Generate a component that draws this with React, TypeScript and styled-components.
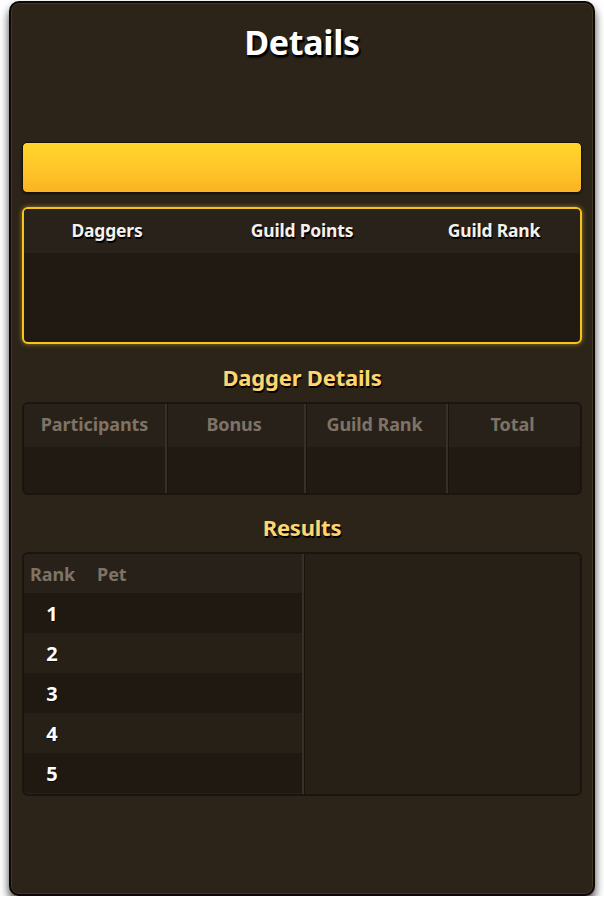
import React from "react";
import styled, { createGlobalStyle } from "styled-components";

const Global = createGlobalStyle`
  html, body { margin: 0; padding: 0; background: #ffffff; }
  body { font-family: "Noto Sans", "Open Sans", sans-serif; }
  * { box-sizing: border-box; }
`;

const Panel = styled.div`
  margin: 1px 0 0 9px;
  width: 586px;
  height: 895px;
  background: #2c2419;
  border: 2px solid #0b0805;
  border-radius: 10px;
  box-shadow: 0 6px 10px rgba(0, 0, 0, 0.75), inset 0 0 0 1px rgba(110, 90, 60, 0.35);
  padding: 0 11px;
  display: flex;
  flex-direction: column;
`;

const Title = styled.h1`
  margin: 17px 0 0;
  font-size: 34px;
  line-height: 44px;
  font-weight: 700;
  color: #ffffff;
  text-align: center;
  letter-spacing: -0.3px;
  text-shadow: 2px 2px 0 #000, 1px 3px 2px rgba(0, 0, 0, 0.8);
`;

const GoldBar = styled.div`
  margin-top: 78px;
  height: 51px;
  border-radius: 5px;
  border: 1px solid #1a1208;
  background: linear-gradient(to bottom, #ffd62b 0%, #ffc82a 45%, #fbb322 100%);
  box-shadow: 0 1px 2px rgba(0, 0, 0, 0.6);
`;

const StatBox = styled.div`
  margin-top: 14px;
  height: 137px;
  border: 2px solid #f5c51d;
  border-radius: 6px;
  background: #201a13;
  box-shadow: 0 0 5px rgba(255, 200, 40, 0.55);
  overflow: hidden;
  display: flex;
  flex-direction: column;
`;

const StatHead = styled.div`
  height: 44px;
  padding-bottom: 2px;
  background: #29221a;
  display: grid;
  grid-template-columns: 166px 224px 160px;
  align-items: center;
`;

const StatLabel = styled.div`
  text-align: center;
  color: #f4f1ec;
  font-size: 17.5px;
  font-weight: 700;
  letter-spacing: -0.2px;
  text-shadow: 1px 2px 0 #000;
`;

const SectionTitle = styled.h2<{ $top: number }>`
  margin: ${(p) => p.$top}px 0 0;
  font-size: 22px;
  line-height: 28px;
  font-weight: 700;
  color: #ffd66e;
  text-align: center;
  letter-spacing: -0.2px;
  text-shadow: 1px 2px 0 #000;
`;

const Table = styled.div<{ $top: number }>`
  margin-top: ${(p) => p.$top}px;
  border: 2px solid #1b1510;
  border-radius: 6px;
  background: #201a13;
  overflow: hidden;
`;

const QuadGrid = styled.div`
  display: grid;
  grid-template-columns: 141px 139px 142px 1fr;
  grid-template-rows: 43px 46px;
`;

const Cell = styled.div<{ $head?: boolean; $divider?: boolean }>`
  background: ${(p) => (p.$head ? "#28211a" : "#201a13")};
  border-left: ${(p) => (p.$divider ? "2px solid #383026" : "none")};
  box-shadow: ${(p) => (p.$divider ? "inset 1px 0 0 #1a140f" : "none")};
  padding-bottom: ${(p) => (p.$head ? "4px" : "0")};
  padding-right: ${(p) => (p.$divider ? "3px" : "0")};
  display: flex;
  align-items: center;
  justify-content: center;
`;

const GrayLabel = styled.span`
  color: #7e7365;
  font-size: 18px;
  font-weight: 700;
  letter-spacing: -0.1px;
`;

const ResultsGrid = styled.div`
  display: grid;
  grid-template-columns: 278px 1fr;
  height: 240px;
`;

const RankList = styled.div`
  display: flex;
  flex-direction: column;
  background: #28211a;
`;

const RankHead = styled.div`
  height: 39px;
  display: flex;
  align-items: center;
  gap: 22px;
  padding-left: 6px;
  background: #28211a;
`;

const RankRow = styled.div<{ $alt: boolean }>`
  height: 40px;
  background: ${(p) => (p.$alt ? "#272017" : "#1f1912")};
  display: flex;
  align-items: center;
`;

const RankNum = styled.div`
  width: 56px;
  text-align: center;
  color: #ffffff;
  font-size: 20px;
  font-weight: 700;
  text-shadow: 1px 1px 0 rgba(0, 0, 0, 0.6);
`;

const SidePane = styled.div`
  background: #262017;
  border-left: 2px solid #383026;
  box-shadow: inset 1px 0 0 #1a140f;
`;

export default function App() {
  const quad = ["Participants", "Bonus", "Guild Rank", "Total"];
  return (
    <>
      <Global />
      <Panel>
        <Title>Details</Title>
        <GoldBar />
        <StatBox>
          <StatHead>
            <StatLabel>Daggers</StatLabel>
            <StatLabel>Guild Points</StatLabel>
            <StatLabel>Guild Rank</StatLabel>
          </StatHead>
        </StatBox>
        <SectionTitle $top={19}>Dagger Details</SectionTitle>
        <Table $top={11}>
          <QuadGrid>
            {quad.map((q, i) => (
              <Cell key={q} $head $divider={i > 0}>
                <GrayLabel>{q}</GrayLabel>
              </Cell>
            ))}
            {quad.map((q, i) => (
              <Cell key={q + "b"} $divider={i > 0} />
            ))}
          </QuadGrid>
        </Table>
        <SectionTitle $top={18}>Results</SectionTitle>
        <Table $top={11}>
          <ResultsGrid>
            <RankList>
              <RankHead>
                <GrayLabel>Rank</GrayLabel>
                <GrayLabel>Pet</GrayLabel>
              </RankHead>
              {[1, 2, 3, 4, 5].map((n) => (
                <RankRow key={n} $alt={n % 2 === 0}>
                  <RankNum>{n}</RankNum>
                </RankRow>
              ))}
            </RankList>
            <SidePane />
          </ResultsGrid>
        </Table>
      </Panel>
    </>
  );
}
